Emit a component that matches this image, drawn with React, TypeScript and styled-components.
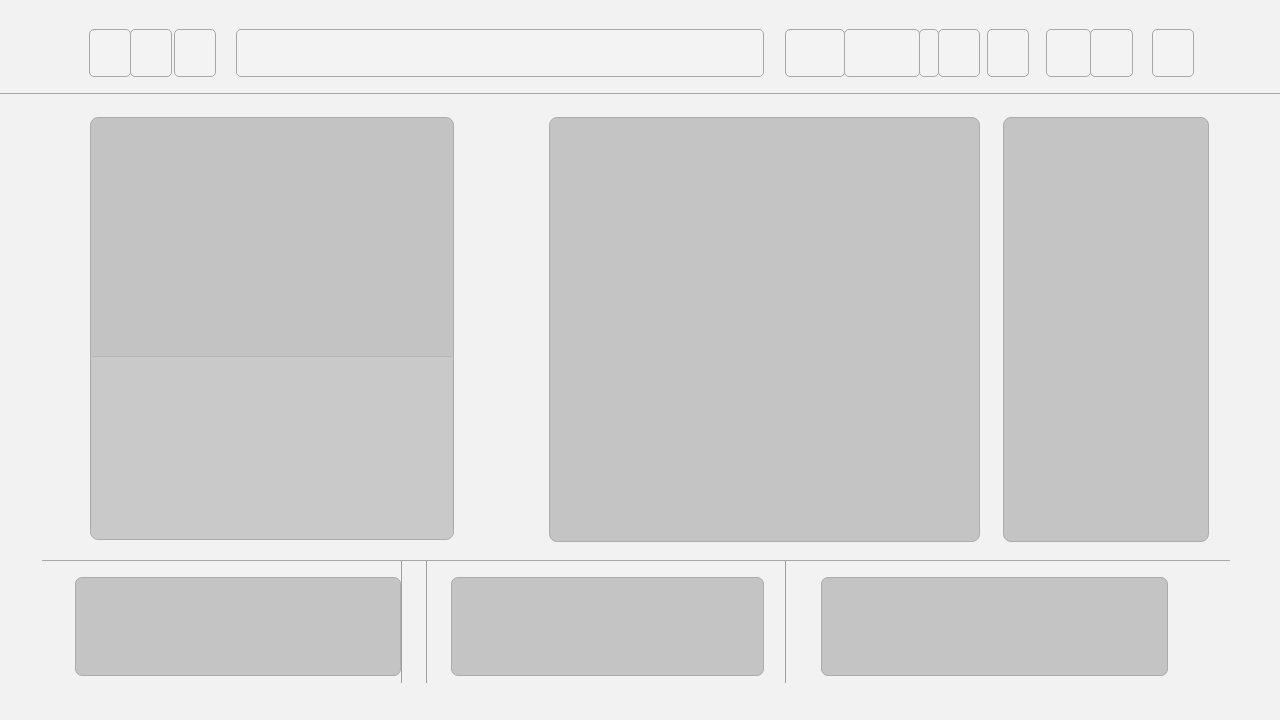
import styled, { createGlobalStyle } from "styled-components";

const Global = createGlobalStyle`
  html, body {
    margin: 0;
    padding: 0;
    background: #f2f2f2;
    font-family: "Liberation Sans", Arial, sans-serif;
  }
`;

const Page = styled.div`
  width: 1280px;
  height: 720px;
  overflow: hidden;
  background: #f2f2f2;
`;

const Header = styled.header`
  display: flex;
  align-items: flex-start;
  height: 94px;
  box-sizing: border-box;
  padding: 29px 0 0 89px;
  border-bottom: 1px solid #a3a3a3;
`;

const Tool = styled.div<{ $w: number; $ml?: number }>`
  width: ${(p) => p.$w}px;
  height: 48px;
  margin-left: ${(p) => p.$ml ?? 0}px;
  box-sizing: border-box;
  border: 1px solid #a8a8a8;
  border-radius: 5px;
  background: #f3f3f3;
`;

const Main = styled.main`
  display: flex;
  align-items: flex-start;
  padding: 23px 0 0 90px;
`;

const Panel = styled.section<{ $w: number; $h: number; $ml?: number }>`
  width: ${(p) => p.$w}px;
  height: ${(p) => p.$h}px;
  margin-left: ${(p) => p.$ml ?? 0}px;
  box-sizing: border-box;
  border: 1px solid #acacac;
  border-radius: 8px;
  background: #c4c4c4;
  overflow: hidden;
`;

const SplitPanel = styled(Panel)`
  display: flex;
  flex-direction: column;
`;

const PanelTop = styled.div`
  height: 238px;
  background: #c3c3c3;
  border-bottom: 1px solid #b4b4b4;
  margin: 0 2px;
`;

const PanelBottom = styled.div`
  flex: 1;
  background: #c9c9c9;
`;

const Footer = styled.footer`
  display: flex;
  width: 1188px;
  height: 122px;
  margin: 18px 0 0 42px;
  border-top: 1px solid #a8a8a8;
`;

const Column = styled.div<{ $w: number; $pl: number; $divider?: boolean }>`
  width: ${(p) => p.$w}px;
  padding: 16px 0 0 ${(p) => p.$pl}px;
  box-sizing: border-box;
  border-right: ${(p) => (p.$divider ? "1px solid #9e9e9e" : "none")};
`;

const Card = styled.div<{ $w: number }>`
  width: ${(p) => p.$w}px;
  height: 99px;
  box-sizing: border-box;
  border: 1px solid #acacac;
  border-radius: 7px;
  background: #c4c4c4;
`;

export default function App() {
  return (
    <Page>
      <Global />
      <Header>
        <Tool $w={42} />
        <Tool $w={42} $ml={-1} />
        <Tool $w={42} $ml={2} />
        <Tool $w={528} $ml={20} />
        <Tool $w={60} $ml={21} />
        <Tool $w={76} $ml={-1} />
        <Tool $w={20} $ml={-1} />
        <Tool $w={42} $ml={-1} />
        <Tool $w={42} $ml={7} />
        <Tool $w={45} $ml={17} />
        <Tool $w={43} $ml={-1} />
        <Tool $w={42} $ml={19} />
      </Header>
      <Main>
        <SplitPanel $w={364} $h={423}>
          <PanelTop />
          <PanelBottom />
        </SplitPanel>
        <Panel $w={431} $h={425} $ml={95} />
        <Panel $w={206} $h={425} $ml={23} />
      </Main>
      <Footer>
        <Column $w={360} $pl={33} $divider>
          <Card $w={326} />
        </Column>
        <Column $w={25} $pl={0} $divider />
        <Column $w={359} $pl={24} $divider>
          <Card $w={313} />
        </Column>
        <Column $w={444} $pl={35}>
          <Card $w={347} />
        </Column>
      </Footer>
    </Page>
  );
}
